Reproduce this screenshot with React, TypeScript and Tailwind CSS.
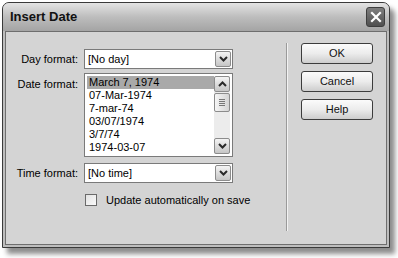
import React from 'react'

const font = { fontFamily: '"Liberation Sans", Arial, sans-serif' }

function Chevron({ up = false }: { up?: boolean }) {
  return (
    <svg width="9" height="6" viewBox="0 0 9 6" className="block">
      <polyline
        points={up ? '1,5 4.5,1.5 8,5' : '1,1 4.5,4.5 8,1'}
        fill="none"
        stroke="#2a2a2a"
        strokeWidth="2"
      />
    </svg>
  )
}

function ArrowButton({ up = false, className = '' }: { up?: boolean; className?: string }) {
  return (
    <div
      className={`flex items-center justify-center rounded-[2px] border border-[#8c8c8c] bg-gradient-to-b from-[#f4f4f4] to-[#c6c6c6] ${className}`}
    >
      <Chevron up={up} />
    </div>
  )
}

function Select({ value }: { value: string }) {
  return (
    <div className="flex h-[20px] w-[149px] items-center border border-[#7a7a7a] bg-white pl-[3px] pr-[1px]">
      <span className="flex-1 text-[11px] leading-none">{value}</span>
      <ArrowButton className="h-[16px] w-[16px]" />
    </div>
  )
}

function Button({ label }: { label: string }) {
  return (
    <div className="flex h-[21px] w-[72px] items-center justify-center rounded-[3px] border border-[#3c3c3c] bg-gradient-to-b from-[#fbfbfb] via-[#ececec] to-[#cdcdcd] text-[11px] text-[#111]">
      {label}
    </div>
  )
}

const dates = ['March 7, 1974', '07-Mar-1974', '7-mar-74', '03/07/1974', '3/7/74', '1974-03-07']

export default function App() {
  return (
    <div className="h-[258px] w-[398px] bg-white pl-[2px] pt-[2px]" style={font}>
      <div className="flex h-[246px] w-[388px] flex-col overflow-hidden rounded-t-[7px] border border-[#3a3a3a] bg-[#bdbdbd] shadow-[5px_6px_5px_rgba(0,0,0,0.45)]">
        {/* title bar */}
        <div className="flex h-[28px] items-center justify-between bg-gradient-to-b from-[#e4e4e4] via-[#bdbdbd] to-[#a4a4a4] pl-[7px] pr-[4px]">
          <span className="text-[13px] font-bold text-[#111]">Insert Date</span>
          <div className="flex h-[20px] w-[19px] items-center justify-center rounded-[3px] border border-[#3e3e3e] bg-gradient-to-b from-[#7e7e7e] to-[#505050]">
            <svg width="12" height="12" viewBox="0 0 12 12">
              <path d="M2 2 L10 10 M10 2 L2 10" stroke="white" strokeWidth="2.2" strokeLinecap="square" />
            </svg>
          </div>
        </div>

        {/* body */}
        <div className="mx-[2px] mb-[2px] flex flex-1 border border-[#6e6e6e] bg-[#d4d4d4]">
          <div className="flex w-[228px] shrink-0 flex-col pt-[17px]">
            <div className="flex items-center">
              <span className="w-[78px] shrink-0 pr-[6px] text-right text-[11px]">Day format:</span>
              <Select value="[No day]" />
            </div>

            <div className="mt-[4px] flex items-start">
              <span className="w-[78px] shrink-0 pr-[6px] pt-[3px] text-right text-[11px]">Date format:</span>
              <div className="flex h-[84px] w-[149px] shrink-0 border border-[#7a7a7a] bg-white p-[2px]">
                <div className="flex flex-1 flex-col">
                  {dates.map((d, i) => (
                    <div
                      key={d}
                      className={`flex h-[13px] items-center pl-[2px] text-[11px] leading-none ${i === 0 ? 'bg-[#a9a9a9]' : ''}`}
                    >
                      {d}
                    </div>
                  ))}
                </div>
                <div className="flex w-[16px] flex-col bg-[#ececec]">
                  <ArrowButton up className="h-[16px] w-[16px]" />
                  <div className="mt-[1px] flex h-[19px] flex-col items-center justify-center gap-[1px] rounded-[2px] border border-[#8c8c8c] bg-gradient-to-r from-[#f6f6f6] to-[#d4d4d4]">
                    <div className="h-[1px] w-[6px] bg-[#777]" />
                    <div className="h-[1px] w-[6px] bg-[#777]" />
                    <div className="h-[1px] w-[6px] bg-[#777]" />
                    <div className="h-[1px] w-[6px] bg-[#777]" />
                  </div>
                  <div className="flex-1" />
                  <ArrowButton className="h-[16px] w-[16px]" />
                </div>
              </div>
            </div>

            <div className="mt-[6px] flex items-center">
              <span className="w-[78px] shrink-0 pr-[6px] text-right text-[11px]">Time format:</span>
              <Select value="[No time]" />
            </div>

            <div className="mt-[9px] flex items-center whitespace-nowrap pl-[79px]">
              <div className="h-[12px] w-[12px] shrink-0 border border-[#6a6a6a] bg-gradient-to-br from-[#e2e2e2] to-[#fafafa]" />
              <span className="ml-[9px] text-[11px]">Update automatically on save</span>
            </div>
          </div>

          <div className="ml-[52px] mt-[11px] mb-[13px] w-[2px] border-l border-r border-l-[#9a9a9a] border-r-[#f2f2f2]" />

          <div className="ml-[13px] flex flex-col gap-[7px] pt-[11px]">
            <Button label="OK" />
            <Button label="Cancel" />
            <Button label="Help" />
          </div>
        </div>
      </div>
    </div>
  )
}
